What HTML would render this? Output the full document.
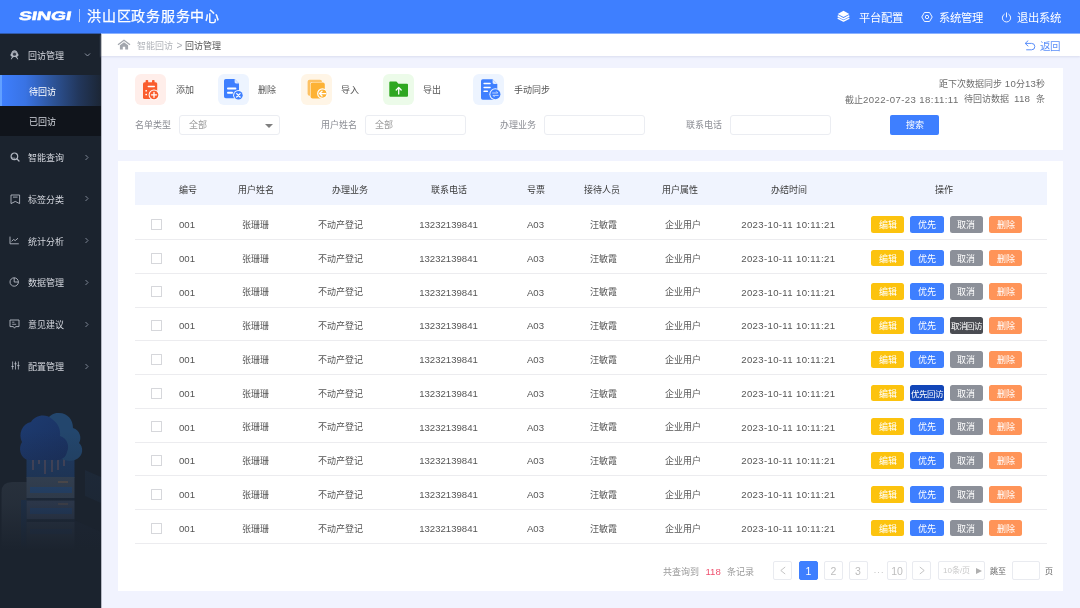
<!DOCTYPE html>
<html lang="zh-CN">
<head>
<meta charset="utf-8">
<title>回访管理</title>
<style>
*{box-sizing:border-box;margin:0;padding:0}
html,body{will-change:transform;width:1080px;height:608px;overflow:hidden;background:#f1f3fe;font-family:"Liberation Sans",sans-serif;color:#333}
.abs,.abs *{position:absolute}
.t{position:absolute;white-space:nowrap;line-height:1}
.c{transform:translateX(-50%)}
/* header */
#hdr{position:absolute;left:0;top:0;width:1080px;height:33px;background:#3e7fff}
#hl1{position:absolute;left:0;top:33px;width:101px;height:1px;background:#305aac;z-index:3}
#hl2{position:absolute;left:101px;top:33px;width:979px;height:1px;background:#8bb2ff;z-index:3}
#hdr .t{color:#fff}
/* sidebar */
#side{position:absolute;left:0;top:34px;width:101px;height:574px;background:#1b232e;overflow:hidden}
#side .t{color:#d4d7de;font-size:9px;font-weight:500}
/* breadcrumb */
#bc{position:absolute;left:101px;top:34px;width:979px;height:22px;background:#fff;box-shadow:0 1px 2px rgba(200,205,230,.6)}
/* cards */
.card{position:absolute;background:#fff}
.inp{position:absolute;height:20px;width:101px;border:1px solid #ebedf2;border-radius:3px;background:#fff}
.lbl{color:#8a8c93;font-size:9px}
.ib{position:absolute;width:31px;height:31px;border-radius:6px;top:6px}
.ic{position:absolute;top:6px}
.il{color:#555;font-size:9px;top:18px}
/* table */
#th{position:absolute;left:17px;top:11px;width:912px;height:33px;background:#f0f4fe}
#th .t{top:13.5px;font-size:9px;color:#3a3a3a;font-weight:500}
.row{position:absolute;left:17px;width:912px;height:33.75px;border-bottom:1px solid #ececef}
.row .t{top:14.5px;font-size:9px;color:#555}
.row .n{font-size:9.6px;top:13.8px}
.cb{position:absolute;left:16px;top:12.5px;width:11px;height:11px;border:1px solid #d6d7db;border-radius:.5px;background:#fff}
.btn{position:absolute;top:9.6px;width:33.7px;height:16.8px;border-radius:2.5px;color:#fff;font-size:9px;line-height:18px;text-align:center;white-space:nowrap;overflow:hidden}
.b1{left:735.7px;background:#fcc30e}
.b2{left:775px;background:#3e7fff}
.b3{left:814.5px;background:#8c9099}
.b4{left:853.8px;background:#ff9458}
.bx{letter-spacing:-1.2px;font-size:8.5px}
.pg{position:absolute;top:400px;height:19px;width:19px;border:1px solid #e9ebf0;border-radius:2px;font-size:10.5px;color:#bdbdbd;text-align:center;line-height:18px;background:#fff}
</style>
</head>
<body>
<!-- HEADER -->
<div id="hdr">
  <div class="t" style="left:18.8px;top:9.6px;font-size:12.2px;font-weight:bold;letter-spacing:-0.1px;transform:skewX(-11deg) scaleX(1.6);transform-origin:left center;-webkit-text-stroke:.45px #fff">SINGI</div>
  <div style="position:absolute;left:79px;top:9px;width:1px;height:13px;background:rgba(255,255,255,.55)"></div>
  <div class="t" style="left:87px;top:8.8px;font-size:14px;font-weight:500;letter-spacing:.75px;-webkit-text-stroke:.25px #fff">洪山区政务服务中心</div>

  <svg style="position:absolute;left:837.2px;top:10.2px" width="13" height="13" viewBox="0 0 13 13"><path d="M6.5 .8 L12.3 3.9 L6.5 7 L.7 3.9Z" fill="#fff"/><path d="M1.2 6 L6.5 8.8 L11.8 6 M1.2 8.3 L6.5 11.1 L11.8 8.3" fill="none" stroke="#fff" stroke-width="1.5" stroke-linejoin="round" stroke-linecap="round"/></svg>
  <svg style="position:absolute;left:920.5px;top:11.2px" width="12" height="12" viewBox="0 0 12 12"><path d="M11.20 6.00 L8.60 10.50 L3.40 10.50 L0.80 6.00 L3.40 1.50 L8.60 1.50Z" fill="none" stroke="#f0f5ff" stroke-width="1" stroke-linejoin="round"/><circle cx="6" cy="6" r="1.7" fill="none" stroke="#f0f5ff" stroke-width="1"/></svg>
  <svg style="position:absolute;left:1001px;top:12px" width="11" height="11" viewBox="0 0 11 11"><path d="M3.3 2.2 A4.2 4.2 0 1 0 7.7 2.2" fill="none" stroke="#f0f5ff" stroke-width="1" stroke-linecap="round"/><path d="M5.5 .8 V5" stroke="#f0f5ff" stroke-width="1" stroke-linecap="round"/></svg>
  <div class="t" style="left:858.6px;top:12.5px;font-size:11.3px">平台配置</div>
  <div class="t" style="left:938.8px;top:12.5px;font-size:11.3px">系统管理</div>
  <div class="t" style="left:1016.8px;top:12.5px;font-size:11.3px">退出系统</div>
</div>

<div id="hl1"></div><div id="hl2"></div>
<div style="position:absolute;left:101px;top:34px;width:1px;height:574px;background:rgba(27,35,46,.28);z-index:4"></div>
<!-- SIDEBAR -->
<div id="side">
  <div style="position:absolute;left:0;top:41px;width:101px;height:31px;background:linear-gradient(90deg,#3e7fff 0%,#3973e4 25%,#2d5499 52%,#22375c 78%,#1c2635 100%)"></div>
  <div style="position:absolute;left:0;top:41px;width:2px;height:31px;background:#62a0ff"></div>
  <div style="position:absolute;left:0;top:72px;width:101px;height:30px;background:#10141b"></div>

  <svg style="position:absolute;left:10px;top:15.500px" width="9" height="10" viewBox="0 0 9 10"><path d="M.7 9.200 L2.200 6.500 C.4 6.700 -.1 4.400 1.200 3.400 C1.700 1.400 3.100 .3 4.500 .3 C5.900 .3 7.300 1.400 7.800 3.400 C9.100 4.400 8.600 6.700 6.800 6.500 L8.300 9.200 L7.300 9.200 C6.600 7.500 5.500 6.900 4.500 6.900 C3.500 6.900 2.400 7.500 1.700 9.200Z" fill="#b3b8c1"/><circle cx="4.500" cy="4.200" r="1.600" fill="#343a47"/><path d="M2.400 3.600 C2.800 2.200 3.600 1.500 4.500 1.500 C5.400 1.500 6.200 2.200 6.600 3.600" fill="none" stroke="#7f8591" stroke-width=".7"/></svg>
  <svg style="position:absolute;left:84px;top:18px" width="7" height="6" viewBox="0 0 7 6"><path d="M1 1.5 L3.5 4 L6 1.5" fill="none" stroke="#8d95a3" stroke-width="1"/></svg>
  <svg style="position:absolute;left:9.5px;top:118.3px" width="10" height="10" viewBox="0 0 10 10"><circle cx="4.4" cy="4.3" r="3.3" fill="none" stroke="#b4b9c3" stroke-width="1.2"/><path d="M6.900 6.900 L9 9" stroke="#b4b9c3" stroke-width="1.3" stroke-linecap="round"/><path d="M2.600 5.200 A2 2 0 0 0 5.200 6.100" fill="none" stroke="#b4b9c3" stroke-width=".8"/></svg>
  <svg style="position:absolute;left:84px;top:119.5px" width="6" height="7" viewBox="0 0 6 7"><path d="M1.5 1 L4 3.5 L1.5 6" fill="none" stroke="#7d8594" stroke-width="1"/></svg>
  <svg style="position:absolute;left:9.5px;top:160.3px" width="11" height="11" viewBox="0 0 11 11"><path d="M1 1 H9.600 V9.600 L5.300 7.400 L1 9.600Z" fill="none" stroke="#b4b9c3" stroke-width=".9" stroke-linejoin="round"/><path d="M3 3.100 H7.600" stroke="#b4b9c3" stroke-width=".9"/></svg>
  <svg style="position:absolute;left:84px;top:161.2px" width="6" height="7" viewBox="0 0 6 7"><path d="M1.5 1 L4 3.5 L1.5 6" fill="none" stroke="#7d8594" stroke-width="1"/></svg>
  <svg style="position:absolute;left:9px;top:202px" width="11" height="9" viewBox="0 0 11 9"><path d="M1 .6 V7.800 H9.800" fill="none" stroke="#b4b9c3" stroke-width=".9"/><path d="M2.600 5.400 L4.500 3.400 L6.200 4.600 L9 2.200" fill="none" stroke="#b4b9c3" stroke-width=".9" stroke-linejoin="round"/></svg>
  <svg style="position:absolute;left:84px;top:203.0px" width="6" height="7" viewBox="0 0 6 7"><path d="M1.5 1 L4 3.5 L1.5 6" fill="none" stroke="#7d8594" stroke-width="1"/></svg>
  <svg style="position:absolute;left:9px;top:243.3px" width="10" height="10" viewBox="0 0 10 10"><circle cx="5.200" cy="5" r="4.200" fill="none" stroke="#b4b9c3" stroke-width=".9"/><path d="M5.200 .8 V5 H9.400" fill="none" stroke="#b4b9c3" stroke-width=".9"/></svg>
  <svg style="position:absolute;left:84px;top:244.5px" width="6" height="7" viewBox="0 0 6 7"><path d="M1.5 1 L4 3.5 L1.5 6" fill="none" stroke="#7d8594" stroke-width="1"/></svg>
  <svg style="position:absolute;left:9px;top:284.7px" width="11" height="11" viewBox="0 0 11 11"><path d="M1 1 H10 V7.600 H6.600 L5.500 9.200 L4.400 7.600 H1Z" fill="none" stroke="#b4b9c3" stroke-width=".9" stroke-linejoin="round"/><path d="M3.200 3.200 H5.400 M3.200 5.300 H7.200" stroke="#b4b9c3" stroke-width=".8"/></svg>
  <svg style="position:absolute;left:84px;top:286.5px" width="6" height="7" viewBox="0 0 6 7"><path d="M1.5 1 L4 3.5 L1.5 6" fill="none" stroke="#7d8594" stroke-width="1"/></svg>
  <svg style="position:absolute;left:10.5px;top:327.3px" width="9" height="9" viewBox="0 0 9 9"><path d="M1.600 .5 V8.500 M4.500 .5 V8.500 M7.400 .5 V8.500" stroke="#b4b9c3" stroke-width=".8"/><path d="M.5 5.500 H2.700 M3.400 2.800 H5.600 M6.300 4.600 H8.500" stroke="#b4b9c3" stroke-width="1"/></svg>
  <svg style="position:absolute;left:84px;top:328.5px" width="6" height="7" viewBox="0 0 6 7"><path d="M1.5 1 L4 3.5 L1.5 6" fill="none" stroke="#7d8594" stroke-width="1"/></svg>
  <div class="t" style="left:27.8px;top:18px">回访管理</div>
  <svg style="position:absolute;left:0;top:366px" width="101" height="208" viewBox="0 400 101 208">
    <defs>
      <linearGradient id="fd" x1="0" y1="0" x2="0" y2="1"><stop offset=".15" stop-color="#1b232e" stop-opacity="0"/><stop offset=".5" stop-color="#1b232e" stop-opacity=".4"/><stop offset=".72" stop-color="#1b232e" stop-opacity="1"/></linearGradient>
      <linearGradient id="cl" x1="0" y1="0" x2="1" y2="1"><stop offset="0" stop-color="#1d3b70"/><stop offset="1" stop-color="#1a305e"/></linearGradient>
    </defs>
    <!-- left rounded block -->
    <path d="M1.5 565 V492 Q1.5 482 12 482 H27 V565Z" fill="#2c3541"/>
    <!-- right faint shapes -->
    <path d="M85 470 L101 477 V503 L85 496Z" fill="#1e2a3a"/>
    <path d="M74 520 L101 532 V565 H74Z" fill="#20293a" opacity=".7"/>
    <!-- tower top (data streams) -->
    <rect x="26.5" y="448" width="48" height="30" fill="#1f3a62"/>
    <path d="M33 452 V470 M39 450 V464 M45 455 V474 M52 452 V472 M58 456 V470 M64 454 V466" stroke="#7a5a5e" stroke-width="1.2" opacity=".75"/>
    <!-- servers -->
    <rect x="26.5" y="477" width="48" height="21" fill="#39475a"/>
    <rect x="30" y="487" width="42" height="6" fill="#274a78"/>
    <rect x="58" y="481" width="10" height="2" fill="#6a5a50" opacity=".7"/>
    <rect x="26.5" y="498" width="48" height="2.5" fill="#1d2a3c"/>
    <rect x="26.5" y="500.500" width="48" height="19" fill="#35425a"/>
    <rect x="30" y="508" width="42" height="6" fill="#264572"/>
    <rect x="58" y="503" width="10" height="2" fill="#5f5450" opacity=".6"/>
    <rect x="26.5" y="519.500" width="48" height="2.500" fill="#1d2a3c"/>
    <rect x="26.5" y="522" width="48" height="40" fill="#2f3b4e"/>
    <rect x="30" y="529" width="42" height="5" fill="#243a5c"/>
    <rect x="21" y="500" width="5.5" height="65" fill="#1d3555" opacity=".8"/>
    <!-- back cloud -->
    <path d="M40 459 C34 450 38 440 44 436 C42 422 50 412 59 413 C68 413 73 420 73 428 C80 430 82 438 79 443 C84 447 83 456 77 459 C72 462 66 461 62 459Z" fill="#23466d"/>
    <!-- front cloud -->
    <path d="M28 460 C20 458 18 448 22 442 C18 434 22 424 31 422 C35 415 46 413 52 419 C58 423 61 430 60 436 C67 438 70 446 67 452 C66 458 60 461 54 460Z" fill="url(#cl)"/>
    <rect x="0" y="400" width="101" height="208" fill="url(#fd)"/>
  </svg>

  <div class="t" style="left:29px;top:54px;color:#fff">待回访</div>
  <div class="t" style="left:29px;top:83.8px">已回访</div>
  <div class="t" style="left:27.8px;top:120px">智能查询</div>
  <div class="t" style="left:27.8px;top:161.5px">标签分类</div>
  <div class="t" style="left:27.8px;top:203.5px">统计分析</div>
  <div class="t" style="left:27.8px;top:245px">数据管理</div>
  <div class="t" style="left:27.8px;top:287px">意见建议</div>
  <div class="t" style="left:27.8px;top:328.5px">配置管理</div>
</div>

<!-- BREADCRUMB -->
<div id="bc">
  <svg style="position:absolute;left:16px;top:5px" width="14" height="11" viewBox="0 0 14 11"><path d="M7 .5 L13.400 5.300 L12.600 6.200 L7 2.100 L1.400 6.200 L.6 5.300Z" fill="#a2a6ad"/><path d="M2.900 6.300 L7 3.300 L11.100 6.300 V10.500 H8.200 V7.800 H5.800 V10.500 H2.900Z" fill="#a2a6ad"/></svg>
  <svg style="position:absolute;left:922.5px;top:5.5px" width="12" height="11" viewBox="0 0 12 11"><path d="M4 .8 L1.2 3.4 L4 6" fill="none" stroke="#5b8ff9" stroke-width="1" stroke-linejoin="round" stroke-linecap="round"/><path d="M1.4 3.4 H7.6 A3.2 3.2 0 0 1 7.6 9.8 H2.6" fill="none" stroke="#5b8ff9" stroke-width="1" stroke-linecap="round"/></svg>

  <div class="t" style="left:36.3px;top:7.5px;font-size:9px;color:#b0b3b9">智能回访</div>
  <div class="t" style="left:75.500px;top:6.500px;font-size:10px;color:#aaadb3">&gt;</div>
  <div class="t" style="left:83.800px;top:7.500px;font-size:9px;color:#555">回访管理</div>
  <div class="t" style="left:938.5px;top:7px;font-size:10.5px;color:#5b8ff9">返回</div>
</div>

<!-- FILTER CARD -->
<div class="card" id="fc" style="left:118px;top:68px;width:945px;height:82px">
  <div class="ib" style="left:17px;background:#ffeeea"></div><svg class="ic" style="left:17px" width="31" height="31" viewBox="0 0 31 31"><rect x="8" y="8.2" width="14.2" height="16.8" rx="1.6" fill="#fa5c2d"/><rect x="10.6" y="6" width="2.6" height="4.4" rx=".8" fill="#fa5c2d"/><rect x="17" y="6" width="2.6" height="4.4" rx=".8" fill="#fa5c2d"/><rect x="12.6" y="11.8" width="7.4" height="1.5" rx=".7" fill="#fff"/><rect x="10.4" y="16" width="1.6" height="1.5" rx=".5" fill="#fff"/><rect x="10.4" y="19.8" width="1.6" height="1.5" rx=".5" fill="#fff"/><circle cx="19" cy="20.8" r="5.4" fill="#fff"/><circle cx="19" cy="20.8" r="4.4" fill="#fa5c2d"/><path d="M16.5 20.8 H21.5 M19 18.3 V23.3" stroke="#fff" stroke-width="1.3" stroke-linecap="round"/></svg>
  <div class="t il" style="left:58px">添加</div>
  <div class="ib" style="left:100px;background:#edf4ff"></div><svg class="ic" style="left:100px" width="31" height="31" viewBox="0 0 31 31"><path d="M7.8 5 H16.6 L21 9.4 V22.4 A1.8 1.8 0 0 1 19.2 24.2 H7.8 A1.8 1.8 0 0 1 6 22.4 V6.8 A1.8 1.8 0 0 1 7.8 5Z" fill="#3e7fff"/><path d="M16.6 5 V8 A1.4 1.4 0 0 0 18 9.4 H21Z" fill="#dfeaff"/><rect x="9" y="13.6" width="9.4" height="1.9" rx=".9" fill="#fff"/><rect x="9" y="17.8" width="6" height="1.9" rx=".9" fill="#fff"/><circle cx="20.4" cy="21.3" r="5.3" fill="#edf4ff"/><circle cx="20.4" cy="21.3" r="4.3" fill="#3e7fff"/><path d="M18.7 19.6 L22.1 23 M22.1 19.6 L18.7 23" stroke="#fff" stroke-width="1.3" stroke-linecap="round"/></svg>
  <div class="t il" style="left:140px">删除</div>
  <div class="ib" style="left:183px;background:#fff5e6"></div><svg class="ic" style="left:183px" width="31" height="31" viewBox="0 0 31 31"><rect x="6.6" y="5.8" width="14.4" height="16" rx="2" fill="#fdc163"/><rect x="9" y="8" width="15" height="17" rx="2.2" fill="#fff5e6"/><rect x="9.6" y="8.6" width="14.2" height="16" rx="2" fill="#fdb235"/><circle cx="21.4" cy="19.6" r="4.7" fill="#fdb235" stroke="#fff" stroke-width="1.2"/><path d="M24.8 19.6 H18.8 M21 17.200 L18.6 19.6 L21 22" fill="none" stroke="#fff" stroke-width="1.4" stroke-linecap="round" stroke-linejoin="round"/></svg>
  <div class="t il" style="left:223px">导入</div>
  <div class="ib" style="left:265.4px;background:#ecfbe9"></div><svg class="ic" style="left:266px" width="31" height="31" viewBox="0 0 31 31"><path d="M6.3 7.4 H12.4 L14.4 9.8 H23 A1 1 0 0 1 24 10.8 V21.8 A1 1 0 0 1 23 22.8 H6.3 A1 1 0 0 1 5.3 21.8 V8.4 A1 1 0 0 1 6.3 7.4Z" fill="#2fa721"/><path d="M14.7 20 V13.6 M12.2 16 L14.7 13.4 L17.2 16" fill="none" stroke="#fff" stroke-width="1.3" stroke-linecap="round" stroke-linejoin="round"/></svg>
  <div class="t il" style="left:305px">导出</div>
  <div class="ib" style="left:355.4px;background:#edf4ff"></div><svg class="ic" style="left:356px" width="31" height="31" viewBox="0 0 31 31"><path d="M8.8 5.3 H18.6 L23.3 10 V24 A1.8 1.8 0 0 1 21.5 25.8 H8.8 A1.8 1.8 0 0 1 7 24 V7.1 A1.8 1.8 0 0 1 8.8 5.3Z" fill="#3e7fff"/><path d="M18.6 5.3 V8.6 A1.4 1.4 0 0 0 20 10 H23.3Z" fill="#dfeaff"/><rect x="9.4" y="8.8" width="7.4" height="1.5" rx=".7" fill="#fff"/><rect x="9.4" y="12.7" width="7.4" height="1.5" rx=".7" fill="#fff"/><rect x="9.4" y="16.6" width="4.6" height="1.5" rx=".7" fill="#fff"/><circle cx="21.4" cy="20.2" r="6" fill="#edf4ff"/><circle cx="21.4" cy="20.2" r="5" fill="#3e7fff"/><path d="M18.6 19 H23.8 L22.4 17.6 M24.2 21.4 H19 L20.4 22.8" fill="none" stroke="#cfe0ff" stroke-width=".9" stroke-linecap="round" stroke-linejoin="round"/></svg>
  <div class="t il" style="left:396px">手动同步</div>

  <div class="t" style="right:18px;top:10.5px;font-size:9px;color:#6e6e6e">距下次数据同步 <span style="font-size:9.6px;letter-spacing:.2px">10</span>分<span style="font-size:9.6px;letter-spacing:.2px">13</span>秒</div>
  <div class="t" style="left:727px;top:26.700px;font-size:9px;color:#6e6e6e">截止<span style="font-size:9.6px;letter-spacing:.42px">2022-07-23 18:11:11</span></div>
  <div class="t" style="left:845.5px;top:26.700px;font-size:9px;color:#6e6e6e">待回访数据</div>
  <div class="t" style="left:896px;top:25.700px;font-size:9.8px;color:#6e6e6e;letter-spacing:.2px">118</div>
  <div class="t" style="left:917.7px;top:26.700px;font-size:9px;color:#6e6e6e">条</div>

  <div class="t lbl" style="left:17px;top:53px">名单类型</div>
  <div class="inp" style="left:61px;top:47px"><div class="t" style="left:9px;top:5px;font-size:9px;color:#999">全部</div><div style="position:absolute;left:84.5px;top:7.5px;border:4px solid transparent;border-top:4px solid #7f7f7f;border-bottom:0"></div></div>
  <div class="t lbl" style="left:203px;top:53px">用户姓名</div>
  <div class="inp" style="left:247px;top:47px"><div class="t" style="left:9px;top:5px;font-size:9px;color:#999">全部</div></div>
  <div class="t lbl" style="left:382px;top:53px">办理业务</div>
  <div class="inp" style="left:426px;top:47px"></div>
  <div class="t lbl" style="left:568px;top:53px">联系电话</div>
  <div class="inp" style="left:612px;top:47px"></div>
  <div style="position:absolute;left:772px;top:47px;width:49px;height:20px;background:#3e7fff;border-radius:2px;color:#fff;font-size:9px;line-height:20px;text-align:center">搜索</div>
</div>

<!-- TABLE CARD -->
<div class="card" id="tc" style="left:118px;top:161px;width:945px;height:430px">
  <div id="th">
    <div class="t c" style="left:52.5px">编号</div>
    <div class="t c" style="left:120.5px">用户姓名</div>
    <div class="t c" style="left:214.5px">办理业务</div>
    <div class="t c" style="left:313.5px">联系电话</div>
    <div class="t c" style="left:400.5px">号票</div>
    <div class="t c" style="left:467px">接待人员</div>
    <div class="t c" style="left:545px">用户属性</div>
    <div class="t c" style="left:653.5px">办结时间</div>
    <div class="t c" style="left:808.5px">操作</div>
  </div>
  <div class="row" style="top:45.25px">
    <div class="cb"></div>
    <div class="t n" style="left:44px">001</div>
    <div class="t c" style="left:120px">张珊珊</div>
    <div class="t c" style="left:205.5px">不动产登记</div>
    <div class="t c n" style="left:313.5px">13232139841</div>
    <div class="t c n" style="left:400.5px">A03</div>
    <div class="t c" style="left:468.5px">汪敏霞</div>
    <div class="t c" style="left:547.7px">企业用户</div>
    <div class="t c n" style="left:653.3px;letter-spacing:.34px">2023-10-11 10:11:21</div>
    <div class="btn b1">编辑</div><div class="btn b2">优先</div><div class="btn b3">取消</div><div class="btn b4">删除</div>
  </div>
  <div class="row" style="top:79px">
    <div class="cb"></div>
    <div class="t n" style="left:44px">001</div>
    <div class="t c" style="left:120px">张珊珊</div>
    <div class="t c" style="left:205.5px">不动产登记</div>
    <div class="t c n" style="left:313.5px">13232139841</div>
    <div class="t c n" style="left:400.5px">A03</div>
    <div class="t c" style="left:468.5px">汪敏霞</div>
    <div class="t c" style="left:547.7px">企业用户</div>
    <div class="t c n" style="left:653.3px;letter-spacing:.34px">2023-10-11 10:11:21</div>
    <div class="btn b1">编辑</div><div class="btn b2">优先</div><div class="btn b3">取消</div><div class="btn b4">删除</div>
  </div>
  <div class="row" style="top:112.75px">
    <div class="cb"></div>
    <div class="t n" style="left:44px">001</div>
    <div class="t c" style="left:120px">张珊珊</div>
    <div class="t c" style="left:205.5px">不动产登记</div>
    <div class="t c n" style="left:313.5px">13232139841</div>
    <div class="t c n" style="left:400.5px">A03</div>
    <div class="t c" style="left:468.5px">汪敏霞</div>
    <div class="t c" style="left:547.7px">企业用户</div>
    <div class="t c n" style="left:653.3px;letter-spacing:.34px">2023-10-11 10:11:21</div>
    <div class="btn b1">编辑</div><div class="btn b2">优先</div><div class="btn b3">取消</div><div class="btn b4">删除</div>
  </div>
  <div class="row" style="top:146.5px">
    <div class="cb"></div>
    <div class="t n" style="left:44px">001</div>
    <div class="t c" style="left:120px">张珊珊</div>
    <div class="t c" style="left:205.5px">不动产登记</div>
    <div class="t c n" style="left:313.5px">13232139841</div>
    <div class="t c n" style="left:400.5px">A03</div>
    <div class="t c" style="left:468.5px">汪敏霞</div>
    <div class="t c" style="left:547.7px">企业用户</div>
    <div class="t c n" style="left:653.3px;letter-spacing:.34px">2023-10-11 10:11:21</div>
    <div class="btn b1">编辑</div><div class="btn b2">优先</div><div class="btn b3 bx" style="background:#4a4c52">取消回访</div><div class="btn b4">删除</div>
  </div>
  <div class="row" style="top:180.25px">
    <div class="cb"></div>
    <div class="t n" style="left:44px">001</div>
    <div class="t c" style="left:120px">张珊珊</div>
    <div class="t c" style="left:205.5px">不动产登记</div>
    <div class="t c n" style="left:313.5px">13232139841</div>
    <div class="t c n" style="left:400.5px">A03</div>
    <div class="t c" style="left:468.5px">汪敏霞</div>
    <div class="t c" style="left:547.7px">企业用户</div>
    <div class="t c n" style="left:653.3px;letter-spacing:.34px">2023-10-11 10:11:21</div>
    <div class="btn b1">编辑</div><div class="btn b2">优先</div><div class="btn b3">取消</div><div class="btn b4">删除</div>
  </div>
  <div class="row" style="top:214px">
    <div class="cb"></div>
    <div class="t n" style="left:44px">001</div>
    <div class="t c" style="left:120px">张珊珊</div>
    <div class="t c" style="left:205.5px">不动产登记</div>
    <div class="t c n" style="left:313.5px">13232139841</div>
    <div class="t c n" style="left:400.5px">A03</div>
    <div class="t c" style="left:468.5px">汪敏霞</div>
    <div class="t c" style="left:547.7px">企业用户</div>
    <div class="t c n" style="left:653.3px;letter-spacing:.34px">2023-10-11 10:11:21</div>
    <div class="btn b1">编辑</div><div class="btn b2 bx" style="background:#1246b8">优先回访</div><div class="btn b3">取消</div><div class="btn b4">删除</div>
  </div>
  <div class="row" style="top:247.75px">
    <div class="cb"></div>
    <div class="t n" style="left:44px">001</div>
    <div class="t c" style="left:120px">张珊珊</div>
    <div class="t c" style="left:205.5px">不动产登记</div>
    <div class="t c n" style="left:313.5px">13232139841</div>
    <div class="t c n" style="left:400.5px">A03</div>
    <div class="t c" style="left:468.5px">汪敏霞</div>
    <div class="t c" style="left:547.7px">企业用户</div>
    <div class="t c n" style="left:653.3px;letter-spacing:.34px">2023-10-11 10:11:21</div>
    <div class="btn b1">编辑</div><div class="btn b2">优先</div><div class="btn b3">取消</div><div class="btn b4">删除</div>
  </div>
  <div class="row" style="top:281.5px">
    <div class="cb"></div>
    <div class="t n" style="left:44px">001</div>
    <div class="t c" style="left:120px">张珊珊</div>
    <div class="t c" style="left:205.5px">不动产登记</div>
    <div class="t c n" style="left:313.5px">13232139841</div>
    <div class="t c n" style="left:400.5px">A03</div>
    <div class="t c" style="left:468.5px">汪敏霞</div>
    <div class="t c" style="left:547.7px">企业用户</div>
    <div class="t c n" style="left:653.3px;letter-spacing:.34px">2023-10-11 10:11:21</div>
    <div class="btn b1">编辑</div><div class="btn b2">优先</div><div class="btn b3">取消</div><div class="btn b4">删除</div>
  </div>
  <div class="row" style="top:315.25px">
    <div class="cb"></div>
    <div class="t n" style="left:44px">001</div>
    <div class="t c" style="left:120px">张珊珊</div>
    <div class="t c" style="left:205.5px">不动产登记</div>
    <div class="t c n" style="left:313.5px">13232139841</div>
    <div class="t c n" style="left:400.5px">A03</div>
    <div class="t c" style="left:468.5px">汪敏霞</div>
    <div class="t c" style="left:547.7px">企业用户</div>
    <div class="t c n" style="left:653.3px;letter-spacing:.34px">2023-10-11 10:11:21</div>
    <div class="btn b1">编辑</div><div class="btn b2">优先</div><div class="btn b3">取消</div><div class="btn b4">删除</div>
  </div>
  <div class="row" style="top:349px">
    <div class="cb"></div>
    <div class="t n" style="left:44px">001</div>
    <div class="t c" style="left:120px">张珊珊</div>
    <div class="t c" style="left:205.5px">不动产登记</div>
    <div class="t c n" style="left:313.5px">13232139841</div>
    <div class="t c n" style="left:400.5px">A03</div>
    <div class="t c" style="left:468.5px">汪敏霞</div>
    <div class="t c" style="left:547.7px">企业用户</div>
    <div class="t c n" style="left:653.3px;letter-spacing:.34px">2023-10-11 10:11:21</div>
    <div class="btn b1">编辑</div><div class="btn b2">优先</div><div class="btn b3">取消</div><div class="btn b4">删除</div>
  </div>
  <div class="t" style="left:545px;top:405.5px;font-size:9px;color:#999">共查询到<span class="n" style="color:#f0506e;font-size:9.6px;margin:0 6px 0 6.5px">118</span>条记录</div>
  <div class="pg" style="left:655px"><svg style="position:absolute;left:5px;top:4px" width="8" height="9" viewBox="0 0 8 9"><path d="M6.2 1 L1.8 4.5 L6.2 8" fill="none" stroke="#bdbdbd" stroke-width=".9"/></svg></div>
  <div class="pg" style="left:681px;background:#3e7fff;border-color:#3e7fff;color:#fff">1</div>
  <div class="pg" style="left:706px">2</div>
  <div class="pg" style="left:730.5px">3</div>
  <div class="t" style="left:755.5px;top:407px;font-size:9px;color:#c4c4c4;letter-spacing:.6px">···</div>
  <div class="pg" style="left:769px;width:20px">10</div>
  <div class="pg" style="left:794px"><svg style="position:absolute;left:5px;top:4px" width="8" height="9" viewBox="0 0 8 9"><path d="M1.8 1 L6.2 4.5 L1.8 8" fill="none" stroke="#bdbdbd" stroke-width=".9"/></svg></div>
  <div class="pg" style="left:820px;width:47px;font-size:8px;color:#c8c8c8;text-align:left;padding-left:4px;line-height:18px">10条/页<span style="position:absolute;left:36.5px;top:5.5px;border:3.5px solid transparent;border-left:6px solid #b0b0b0;border-right:0"></span></div>
  <div class="t" style="left:872px;top:407px;font-size:8px;color:#666">跳至</div>
  <div class="pg" style="left:893.5px;width:28.5px"></div>
  <div class="t" style="left:927px;top:407px;font-size:8px;color:#666">页</div>
</div>
</body>
</html>
